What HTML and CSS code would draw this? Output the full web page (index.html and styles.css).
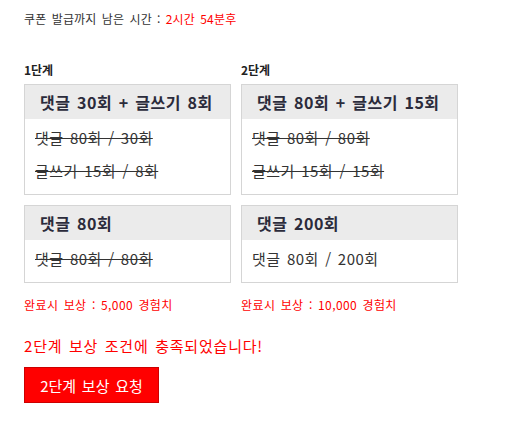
FILE: index.html
```html
<!DOCTYPE html>
<html lang="ko">
<head>
<meta charset="utf-8">
<link rel="stylesheet" href="styles.css">
</head>
<body>
<div class="page">
  <p class="timer">쿠폰 발급까지 남은 시간 : <span class="red">2시간 54분후</span></p>
  <div class="stages">
    <div class="col col1">
      <div class="label">1단계</div>
      <div class="box">
        <div class="head">댓글 30회 + 글쓰기 8회</div>
        <div class="body">
          <div class="line done">댓글 80회 / 30회</div>
          <div class="line done">글쓰기 15회 / 8회</div>
        </div>
      </div>
      <div class="box">
        <div class="head">댓글 80회</div>
        <div class="body">
          <div class="line done">댓글 80회 / 80회</div>
        </div>
      </div>
      <div class="reward">완료시 보상 : 5,000 경험치</div>
    </div>
    <div class="col col2">
      <div class="label">2단계</div>
      <div class="box">
        <div class="head">댓글 80회 + 글쓰기 15회</div>
        <div class="body">
          <div class="line done">댓글 80회 / 80회</div>
          <div class="line done">글쓰기 15회 / 15회</div>
        </div>
      </div>
      <div class="box">
        <div class="head">댓글 200회</div>
        <div class="body">
          <div class="line">댓글 80회 / 200회</div>
        </div>
      </div>
      <div class="reward">완료시 보상 : 10,000 경험치</div>
    </div>
  </div>
  <p class="notice">2단계 보상 조건에 충족되었습니다!</p>
  <button class="btn" type="button">2단계 보상 요청</button>
</div>
</body>
</html>
```

FILE: styles.css
```css
html, body {
  margin: 0;
  padding: 0;
  background: #fff;
}
body {
  font-family: "Noto Sans CJK KR", "Noto Sans", sans-serif;
  color: #333;
  word-spacing: 0.1em;
}
.page {
  padding: 11px 24px 0;
}
.timer {
  margin: 0;
  font-size: 12px;
  line-height: 16px;
  letter-spacing: 0.2px;
  color: #333;
}
.red {
  color: #ff0000;
}
.stages {
  display: flex;
  gap: 10px;
  align-items: flex-start;
  margin-top: 35px;
}
.col {
  display: flex;
  flex-direction: column;
  flex: none;
}
.col1 { width: 207px; }
.col2 { width: 217px; }
.label {
  font-size: 12px;
  line-height: 16px;
  font-weight: bold;
  color: #222;
  margin-bottom: 6px;
}
.box {
  border: 1px solid #d5d5d5;
  background: #fff;
}
.box + .box {
  margin-top: 10px;
}
.head {
  height: 34px;
  line-height: 34px;
  background: #ebebeb;
  padding-left: 15px;
  font-size: 16px;
  font-weight: bold;
  letter-spacing: 0.5px;
  color: #2b2b3b;
  white-space: nowrap;
}
.body {
  padding: 2px 10px 7px;
}
.line {
  font-size: 15px;
  line-height: 33px;
  letter-spacing: 0.5px;
  color: #333;
  white-space: nowrap;
}
.done {
  text-decoration: line-through;
}
.reward {
  margin-top: 14px;
  font-size: 12px;
  line-height: 16px;
  letter-spacing: 0.4px;
  color: #ff0000;
}
.notice {
  margin: 23px 0 0;
  font-size: 15px;
  line-height: 20px;
  letter-spacing: 0.8px;
  color: #ff0000;
}
.btn {
  display: block;
  margin-top: 11px;
  width: 135px;
  height: 36px;
  padding: 0;
  background: #ff0000;
  border: 1px solid #cc0000;
  color: #fff;
  font-family: inherit;
  font-size: 15px;
  word-spacing: 0.1em;
  cursor: pointer;
}
```
